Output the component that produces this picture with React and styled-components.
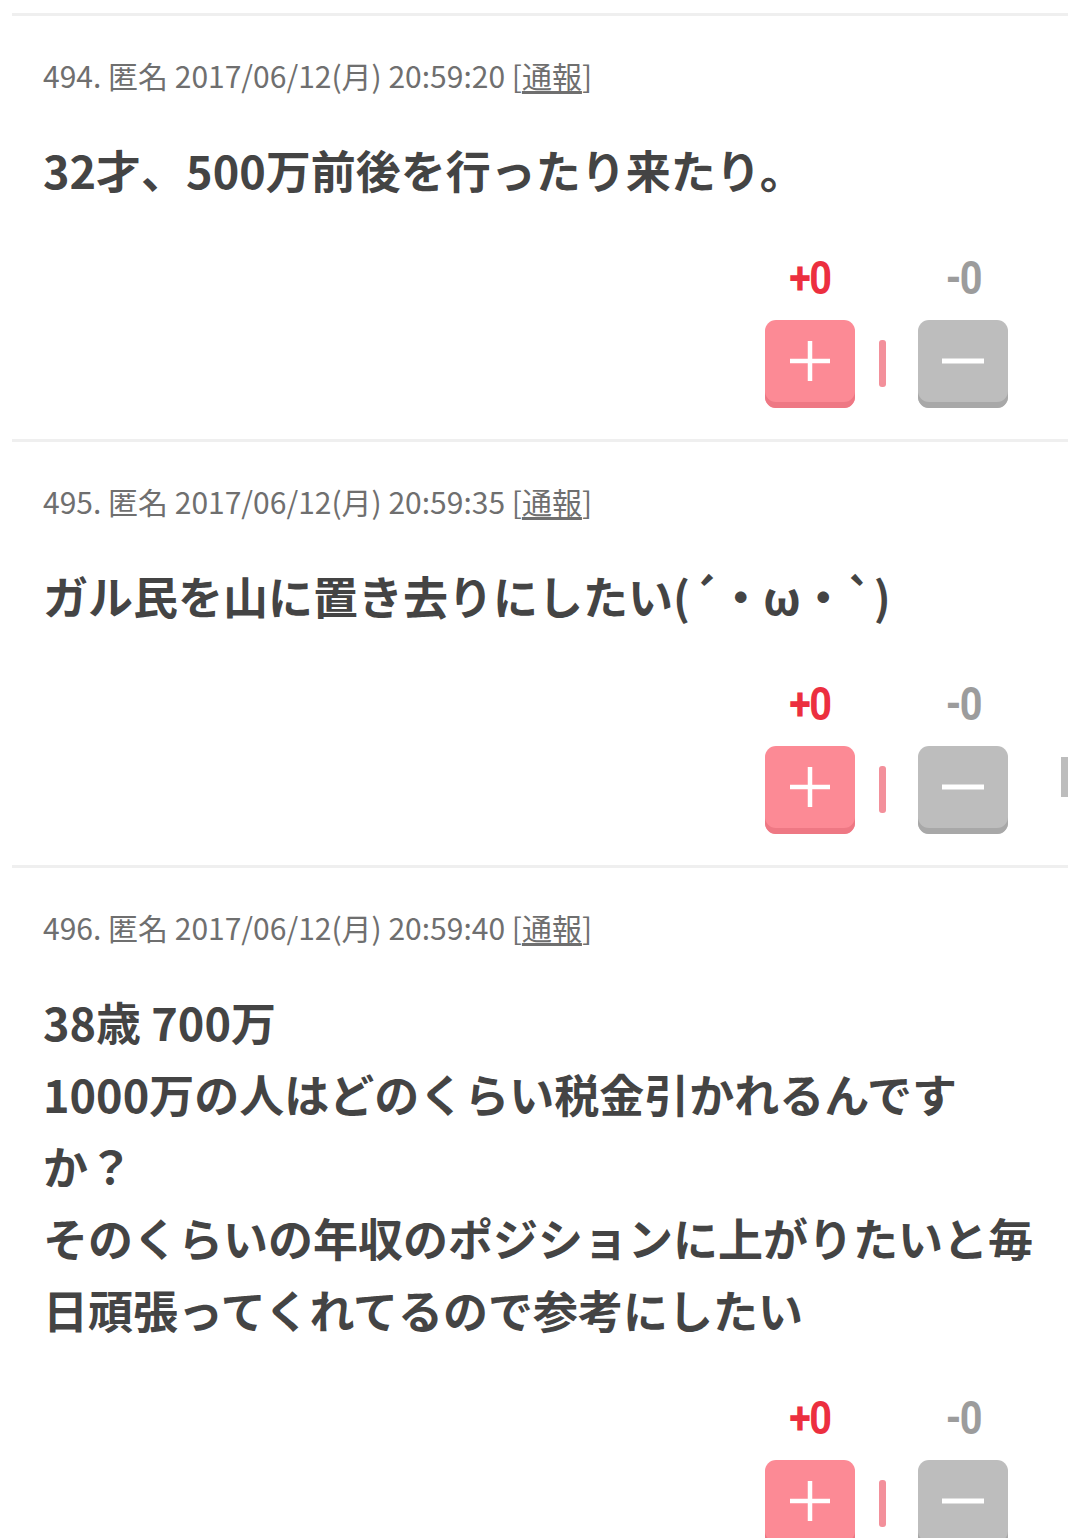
import React from 'react';
import styled, { createGlobalStyle } from 'styled-components';

const GlobalStyle = createGlobalStyle`
  html, body {
    margin: 0;
    padding: 0;
    background: #ffffff;
  }
  body {
    font-family: "Noto Sans CJK JP", "Noto Sans", sans-serif;
    -webkit-font-smoothing: antialiased;
  }
`;

const Thread = styled.div`
  padding-top: 13px;
  overflow: hidden;
`;

const Post = styled.article`
  margin: 0 12px;
  border-top: 3px solid #efefef;
  padding: 39px 33px 31px 31px;
`;

const Meta = styled.div`
  font-size: 30px;
  line-height: 40px;
  color: #6f6f6f;
  white-space: nowrap;
`;

const Report = styled.span`
  text-decoration: underline;
  text-underline-offset: 3px;
`;

const Body = styled.div`
  margin-top: 39px;
  font-size: 45px;
  line-height: 72px;
  font-weight: 700;
  color: #444444;
  white-space: pre-line;
`;

const VoteRow = styled.div`
  margin-top: 48px;
  padding-right: 27px;
  display: flex;
  justify-content: flex-end;
`;

const VoteGroup = styled.div`
  display: flex;
  align-items: flex-end;
`;

const VoteCol = styled.div`
  display: flex;
  flex-direction: column;
  align-items: center;
  width: 90px;
`;

const Count = styled.div`
  font-family: Roboto, "Liberation Sans", sans-serif;
  font-size: 46px;
  line-height: 48px;
  font-weight: 700;
  letter-spacing: -2px;
  color: ${p => (p.plus ? '#ec2f3f' : '#9c9c9c')};
  margin-bottom: 18px;
  transform: scaleX(0.86);
`;

const VoteButton = styled.button`
  width: 90px;
  height: 88px;
  border: none;
  border-radius: 11px;
  padding: 0 0 6px;
  display: flex;
  align-items: center;
  justify-content: center;
  cursor: pointer;
  background: ${p => (p.plus ? '#fc8a95' : '#bdbdbd')};
  box-shadow: inset 0 -6px 0 ${p => (p.plus ? '#ee7884' : '#a8a8a8')};
`;

const Divider = styled.div`
  width: 7px;
  height: 47px;
  border-radius: 3px;
  background: #f3909b;
  margin: 0 32px 21px 24px;
`;

const ScrollThumb = styled.div`
  position: absolute;
  left: 1061px;
  top: 757px;
  width: 7px;
  height: 40px;
  background: #bdbdbd;
`;

const PlusIcon = () => (
  <svg width="44" height="44" viewBox="0 0 44 44">
    <path d="M22 2v40M2 22h40" stroke="#fff" strokeWidth="4.5" />
  </svg>
);

const MinusIcon = () => (
  <svg width="44" height="44" viewBox="0 0 44 44">
    <path d="M1 22h42" stroke="#fff" strokeWidth="5" />
  </svg>
);

const posts = [
  {
    no: 494,
    time: '2017/06/12(月) 20:59:20',
    text: '32才、500万前後を行ったり来たり。',
  },
  {
    no: 495,
    time: '2017/06/12(月) 20:59:35',
    text: 'ガル民を山に置き去りにしたい(´・ω・`)',
  },
  {
    no: 496,
    time: '2017/06/12(月) 20:59:40',
    text:
      '38歳 700万\n1000万の人はどのくらい税金引かれるんですか？\nそのくらいの年収のポジションに上がりたいと毎日頑張ってくれてるので参考にしたい',
  },
];

export default function App() {
  return (
    <>
      <GlobalStyle />
      <Thread>
        {posts.map(post => (
          <Post key={post.no}>
            <Meta>
              {post.no}. 匿名 {post.time} [<Report>通報</Report>]
            </Meta>
            <Body>{post.text}</Body>
            <VoteRow>
              <VoteGroup>
                <VoteCol>
                  <Count plus>+0</Count>
                  <VoteButton plus aria-label="plus">
                    <PlusIcon />
                  </VoteButton>
                </VoteCol>
                <Divider />
                <VoteCol>
                  <Count>-0</Count>
                  <VoteButton aria-label="minus">
                    <MinusIcon />
                  </VoteButton>
                </VoteCol>
              </VoteGroup>
            </VoteRow>
          </Post>
        ))}
      </Thread>
      <ScrollThumb />
    </>
  );
}
